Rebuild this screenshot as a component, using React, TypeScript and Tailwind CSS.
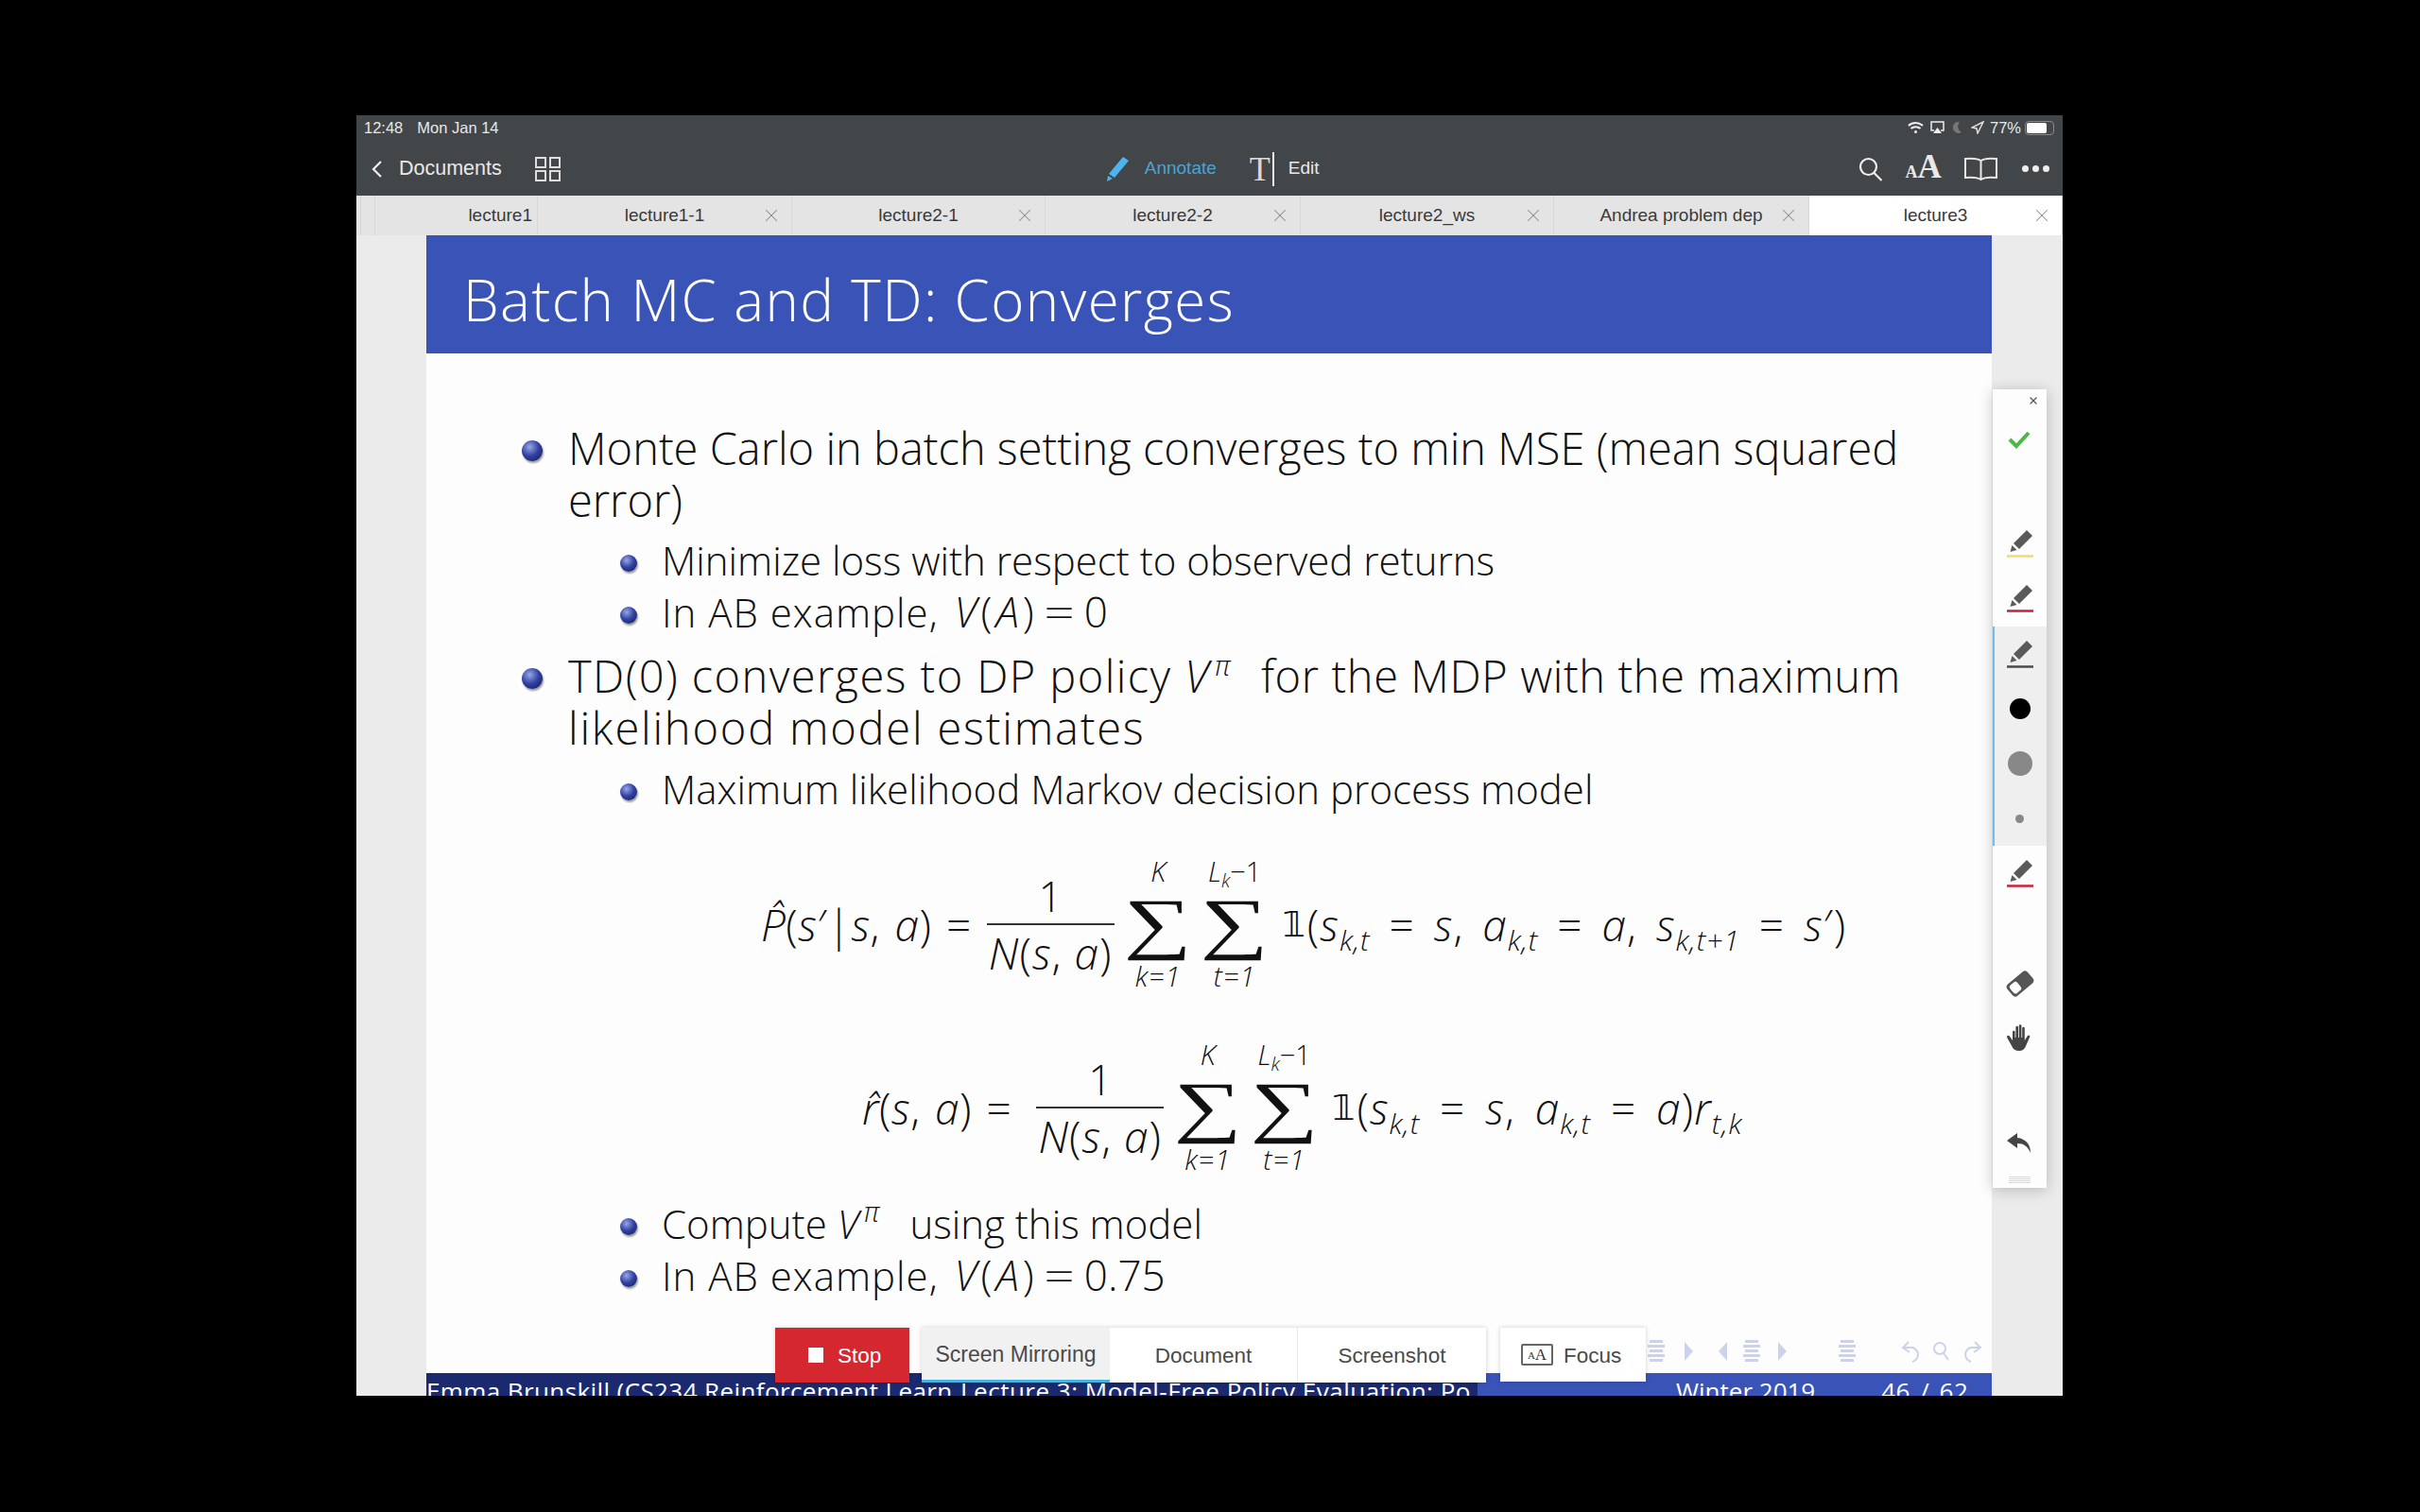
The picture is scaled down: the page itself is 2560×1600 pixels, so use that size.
import { ReactNode } from 'react';
import { X } from 'lucide-react';

const uiFont = "font-['Liberation_Sans',Arial,sans-serif]";
const slideFont = "font-['Open_Sans',sans-serif] font-light";

const tabs = [
  { label: 'lecture1-1', width: 'w-[269px]' },
  { label: 'lecture2-1', width: 'w-[268px]' },
  { label: 'lecture2-2', width: 'w-[270px]' },
  { label: 'lecture2_ws', width: 'w-[268px]' },
  { label: 'Andrea problem dep', width: 'w-[270px]' },
];

function Tab({ label, width, active }: { label: string; width: string; active?: boolean }) {
  return (
    <div
      className={`relative flex h-full items-center justify-center border-r border-[#d8d8d8] ${width} ${active ? 'bg-white' : ''}`}
    >
      <span className="text-[19px] text-[#3a3a3a]">{label}</span>
      <X className="absolute right-[10px] top-[10px] text-[#8a8a8a]" size={22} strokeWidth={1.1} />
    </div>
  );
}

function Bullet({ big }: { big?: boolean }) {
  return (
    <span
      className={`shrink-0 rounded-full bg-[radial-gradient(circle_at_38%_32%,#98a6e8,#3040a0_48%,#141c58_95%)] shadow-[1px_2px_2px_#9a9a9a] ${big ? 'size-[22px]' : 'size-[18px]'}`}
    />
  );
}

function Item({ children }: { children: ReactNode }) {
  return (
    <div className="flex items-start text-[47px]">
      <span className="flex h-[55px] w-[150px] items-center justify-end pr-[27px] pt-[4px]">
        <Bullet big />
      </span>
      <div className="whitespace-nowrap">{children}</div>
    </div>
  );
}

function SubItem({ children }: { children: ReactNode }) {
  return (
    <div className="flex items-start text-[42px]">
      <span className="flex h-[55px] w-[249px] items-center justify-end pr-[26px] pt-[6px]">
        <Bullet />
      </span>
      <div className="whitespace-nowrap">{children}</div>
    </div>
  );
}

function I({ children }: { children: ReactNode }) {
  return <span className="italic">{children}</span>;
}

function Sub({ children }: { children: ReactNode }) {
  return <span className="relative top-[10px] text-[30px] leading-[0] italic">{children}</span>;
}

function Pi() {
  return <span className="relative -top-[18px] ml-[5px] mr-[32px] text-[29px] leading-[0] italic">π</span>;
}

function VofA({ value }: { value: string }) {
  return (
    <span className="ml-[6px] text-[44px]">
      <I>V</I>
      <span className="mx-[4px]">(</span>
      <I>A</I>
      <span className="ml-[4px]">)</span>
      <span className="mx-[14px] inline-block scale-x-[1.3]">=</span>
      {value}
    </span>
  );
}

function Fraction() {
  return (
    <div className="ml-[16px] mr-[6px] flex w-[135px] flex-col items-center">
      <div className="h-[58px] text-[44px] leading-[58px]">1</div>
      <div className="h-[2px] w-full bg-[#333]" />
      <div className="h-[58px] text-[46px] leading-[58px] tracking-[1px]">
        <I>N</I>(<I>s</I>, <I>a</I>)
      </div>
    </div>
  );
}

function Sum({ top, bottom }: { top: ReactNode; bottom: ReactNode }) {
  return (
    <div className="flex w-[81px] flex-col items-center">
      <div className="h-[30px] text-[29px] leading-[30px]">{top}</div>
      <div className="flex h-[80px] scale-x-[1.4] items-center font-['Liberation_Serif',serif] text-[72px] leading-[80px] font-normal">
        ∑
      </div>
      <div className="h-[32px] text-[29px] leading-[32px] tracking-[1px] italic">{bottom}</div>
    </div>
  );
}

function SumPair() {
  return (
    <>
      <Sum top={<I>K</I>} bottom="k=1" />
      <Sum
        top={
          <span className="whitespace-nowrap">
            <I>L</I>
            <span className="relative top-[6px] text-[20px] leading-[0] italic">k</span>−1
          </span>
        }
        bottom="t=1"
      />
    </>
  );
}

function Indicator() {
  return <span className="ml-[10px] mr-[2px] font-['DejaVu_Sans',sans-serif] text-[38px] font-normal">𝟙</span>;
}

function Pencil({ line }: { line: string }) {
  return (
    <svg width="30" height="30" viewBox="0 0 30 30">
      <path d="M22 1l6 6-14 14-6-6z" fill="#5a5a5a" />
      <path d="M6.500 17l5 5-7 2z" fill="#5a5a5a" />
      <path d="M1 28.500h28" stroke={line} strokeWidth="2.500" />
    </svg>
  );
}

function NavList({ className = '' }: { className?: string }) {
  return (
    <svg className={className} width="18" height="24" viewBox="0 0 18 24" fill="#ccd2ea">
      <rect x="2" y="0" width="14" height="3" />
      <rect x="0" y="5" width="18" height="3" />
      <rect x="2" y="10" width="14" height="3" />
      <rect x="0" y="15" width="18" height="3" />
      <rect x="2" y="20" width="14" height="3" />
    </svg>
  );
}

function NavArrow({ left }: { left?: boolean }) {
  return (
    <svg width="9" height="20" viewBox="0 0 9 20" fill="#ccd2ea">
      <path d={left ? 'M9 0v20L0 10z' : 'M0 0v20l9-10z'} />
    </svg>
  );
}

function SidePanel() {
  return (
    <div className="absolute left-[1731px] top-[290px] flex h-[845px] w-[57px] flex-col bg-[#fdfdfd] shadow-[0_2px_14px_rgba(0,0,0,0.22)]">
      <div className="relative h-[251px] shrink-0">
        <X className="absolute right-[8px] top-[6px] text-[#555]" size={12} strokeWidth={2.5} />
        <svg className="absolute left-[16px] top-[43px]" width="24" height="20" viewBox="0 0 24 20">
          <path d="M2 10l7 7L22 3" fill="none" stroke="#4cb848" strokeWidth="4" />
        </svg>
        <div className="absolute left-[14px] top-[148px]">
          <Pencil line="#f5d76e" />
        </div>
        <div className="absolute left-[14px] top-[206px]">
          <Pencil line="#c8203a" />
        </div>
      </div>
      <div className="flex h-[232px] shrink-0 flex-col items-center border-l-2 border-[#6cc0e8] bg-[#efefef] pt-[14px]">
        <div className="-ml-[2px] h-[30px]">
          <Pencil line="#4a4a4a" />
        </div>
        <span className="-ml-[2px] mt-[32px] size-[22px] rounded-full bg-black" />
        <span className="-ml-[2px] mt-[34px] size-[26px] rounded-full bg-[#888]" />
        <span className="-ml-[2px] mt-[41px] size-[9px] rounded-full bg-[#888]" />
      </div>
      <div className="relative flex-1">
        <div className="absolute left-[14px] top-[14px]">
          <Pencil line="#c8203a" />
        </div>
        <svg className="absolute left-[14px] top-[131px]" width="30" height="30" viewBox="0 0 30 30">
          <g transform="rotate(-40 15 15)">
            <rect x="1" y="7" width="28" height="16" rx="4" fill="#555" />
            <rect x="3.500" y="9.500" width="10" height="11" rx="3" fill="#fdfdfd" />
          </g>
        </svg>
        <svg className="absolute left-[14px] top-[188px]" width="28" height="30" viewBox="0 0 28 30" fill="#444">
          <path d="M7 9a1.300 1.300 0 0 1 2.600 0v6h.8V4a1.300 1.300 0 0 1 2.600 0v11h.8V2.500a1.300 1.300 0 0 1 2.600 0V15h.8V5a1.300 1.300 0 0 1 2.600 0v13l2.800-4.500c1.500-2 3.200-.6 2.500 1-1.500 3.300-3 7.500-4.600 10.500-1.300 2.600-3.300 4-6.500 4-4 0-6.500-1.500-7.800-5L1.200 15c-.7-2 1.500-3 2.700-1.500L7 18z" />
        </svg>
        <svg className="absolute left-[14px] top-[303px]" width="28" height="24" viewBox="0 0 28 24" fill="#444">
          <path d="M12 1L1 9l11 8v-5c7 0 11 3 14 10 0-9-5-15-14-16z" />
        </svg>
        <div className="absolute left-[17px] top-[350px] flex w-[23px] flex-col gap-[1px]">
          <span className="h-[1px] bg-[#d8d8d8]" />
          <span className="h-[1px] bg-[#d8d8d8]" />
          <span className="h-[1px] bg-[#d8d8d8]" />
          <span className="h-[1px] bg-[#d8d8d8]" />
        </div>
      </div>
    </div>
  );
}

function MirrorBar() {
  return (
    <div className={`absolute left-[443px] top-[1283px] flex h-[58px] items-start text-[22.500px] text-[#4a4a4a] ${uiFont}`}>
      <div className="flex h-[58px] w-[142px] items-center bg-[#d5272f] pl-[35px] text-white shadow-[0_0_4px_rgba(0,0,0,0.2)]">
        <span className="size-[16px] bg-white" />
        <span className="ml-[15px] pt-[2px]">Stop</span>
      </div>
      <div className="ml-[13px] flex h-[58px] shadow-[0_0_5px_rgba(0,0,0,0.18)]">
        <div className="flex w-[199px] items-center justify-center border-b-[3px] border-[#45b4e4] bg-[#f1f1f1] pt-[2px] text-[23px]">
          Screen Mirroring
        </div>
        <div className="flex w-[199px] items-center justify-center border-r border-[#e6e6e6] bg-white pt-[2px]">Document</div>
        <div className="flex w-[199px] items-center justify-center bg-white pt-[2px]">Screenshot</div>
      </div>
      <div className="ml-[15px] flex h-[57px] w-[154px] items-center bg-white pl-[22px] shadow-[0_0_5px_rgba(0,0,0,0.18)]">
        <span className="flex h-[23px] w-[34px] items-end justify-center rounded-[2px] border-2 border-[#666] font-['Liberation_Serif',serif] leading-[18px] text-[#333]">
          <span className="text-[11px]">A</span>
          <span className="text-[17px]">A</span>
        </span>
        <span className="ml-[11px] pt-[2px]">Focus</span>
      </div>
    </div>
  );
}

export default function App() {
  return (
    <div className="h-[1600px] w-[2560px] overflow-hidden bg-black pl-[377px] pt-[122px]">
      <div className={`relative flex h-[1355px] w-[1805px] flex-col overflow-hidden ${uiFont}`}>
        <header className="flex h-[85px] shrink-0 flex-col bg-[#434649] text-[#e8e8e8]">
          <div className="flex h-[26px] items-center pl-[8px] pr-[9px] text-[16.500px]">
            <span>12:48</span>
            <span className="ml-[15px]">Mon Jan 14</span>
            <div className="ml-auto flex items-center">
              <svg width="17" height="14" viewBox="0 0 17 14" fill="none" stroke="#eee" strokeWidth="2">
                <path d="M1 5c4-4 11-4 15 0M3.500 8c2.700-2.500 7.300-2.500 10 0" />
                <circle cx="8.500" cy="11.500" r="1.500" fill="#eee" stroke="none" />
              </svg>
              <svg className="ml-[7px]" width="15" height="14" viewBox="0 0 15 14" fill="none">
                <path d="M4 10H1V1h13v9h-3" stroke="#eee" strokeWidth="1.500" />
                <path d="M7.500 7l4.500 6H3z" fill="#eee" />
              </svg>
              <svg className="ml-[9px]" width="10" height="14" viewBox="0 0 10 14">
                <path d="M7 1a6 6 0 1 0 2 11A7 7 0 0 1 7 1z" fill="#777" />
              </svg>
              <svg className="ml-[9px]" width="14" height="14" viewBox="0 0 14 14">
                <path d="M13 1L1 7l5 1 1 5z" fill="none" stroke="#ddd" strokeWidth="1.500" />
              </svg>
              <span className="ml-[6px]">77%</span>
              <span className="ml-[4px] flex h-[15px] w-[31px] items-center rounded-[4px] border border-[#888] p-[1px]">
                <span className="h-full w-[77%] rounded-[2px] bg-white" />
              </span>
            </div>
          </div>
          <div className="flex flex-1 items-center pt-[2px] text-[21.500px]">
            <svg className="ml-[16px]" width="12" height="20" viewBox="0 0 12 20" fill="none" stroke="#eee" strokeWidth="2.200">
              <path d="M10 2L2 10l8 8" />
            </svg>
            <span className="ml-[17px]">Documents</span>
            <svg className="ml-[35px]" width="27" height="26" viewBox="0 0 27 26" fill="none" stroke="#ddd" strokeWidth="2">
              <rect x="1" y="1" width="10" height="10" />
              <rect x="16" y="1" width="10" height="10" />
              <rect x="1" y="15" width="10" height="10" />
              <rect x="16" y="15" width="10" height="10" />
            </svg>
            <svg className="ml-[576px]" width="26" height="27" viewBox="0 0 26 27" fill="#4db4ef">
              <path d="M19 1l6 4L10 23l-6-4z" />
              <path d="M3 21l5 3-6 3z" />
            </svg>
            <span className="ml-[16px] text-[19px] text-[#4aa3d4]">Annotate</span>
            <span className="relative ml-[35px] w-[26px] font-['Liberation_Serif',serif] text-[36px] leading-[36px] font-light text-[#d8d8d8]">
              T
              <span className="absolute right-0 top-0 h-[36px] w-[1.500px] bg-[#eee]" />
            </span>
            <span className="ml-[15px] text-[19px]">Edit</span>
            <svg className="ml-[570px]" width="26" height="26" viewBox="0 0 26 26" fill="none" stroke="#eee" strokeWidth="2.200">
              <circle cx="10.500" cy="10.500" r="8.500" />
              <path d="M16.500 17l8 8" />
            </svg>
            <span className="ml-[24px] flex w-[40px] items-baseline pt-[2px] font-['Liberation_Serif',serif] font-bold leading-[30px]">
              <span className="text-[18px]">A</span>
              <span className="text-[35px]">A</span>
            </span>
            <svg className="ml-[22px]" width="35" height="26" viewBox="0 0 35 26" fill="none" stroke="#e8e8e8" strokeWidth="2">
              <path d="M17.500 4C14 1.500 6 1.500 1 2v20c5-.5 13-.5 16.500 2 3.500-2.500 11.500-2.500 16.500-2V2C29 1.500 21 1.500 17.500 4zM17.500 4v20" />
            </svg>
            <span className="ml-[26px] flex gap-[4px]">
              <span className="size-[7px] rounded-full bg-[#eee]" />
              <span className="size-[7px] rounded-full bg-[#eee]" />
              <span className="size-[7px] rounded-full bg-[#eee]" />
            </span>
          </div>
        </header>

        <nav className="flex h-[42px] shrink-0 bg-[#e4e4e4]">
          <div className="relative flex h-full w-[192px] items-center justify-end border-r border-[#d8d8d8] pr-[5px]">
            <span className="absolute left-[4px] top-0 h-full w-[1px] bg-[#d8d8d8]" />
            <span className="absolute left-[19px] top-0 h-full w-[1px] bg-[#d8d8d8]" />
            <span className="text-[19px] text-[#3a3a3a]">lecture1</span>
          </div>
          {tabs.map((tab) => (
            <Tab key={tab.label} label={tab.label} width={tab.width} />
          ))}
          <Tab label="lecture3" width="w-[268px]" active />
        </nav>

        <main className="flex min-h-0 flex-1 bg-[#ebebeb] pl-[74px]">
          <div className={`flex h-[1228px] w-[1656px] flex-col bg-[#fdfdfd] text-[#111] ${slideFont}`}>
            <div className="flex h-[125px] shrink-0 items-center bg-[#3953b7] pl-[39px] pt-[10px] text-[60px] tracking-[1.400px] text-white">
              Batch MC and TD: Converges
            </div>

            <div className="h-[1079px] shrink-0 overflow-hidden pt-[73px] leading-[55px]">
              <Item>
                Monte Carlo in batch setting converges to min MSE (mean squared
                <br />
                error)
              </Item>
              <div className="mt-[8px]">
                <SubItem>Minimize loss with respect to observed returns</SubItem>
                <SubItem>
                  <span className="tracking-[1px]">In AB example,</span> <VofA value="0" />
                </SubItem>
              </div>
              <div className="mt-[13px]">
                <Item>
                  <span className="tracking-[1.400px]">
                    TD(0) converges to DP policy <I>V</I>
                  </span>
                  <Pi />
                  <span className="tracking-[0.600px]">for the MDP with the maximum</span>
                  <br />
                  <span className="tracking-[1.800px]">likelihood model estimates</span>
                </Item>
              </div>
              <div className="mt-[9px]">
                <SubItem>Maximum likelihood Markov decision process model</SubItem>
              </div>

              <div className="mt-[42px] flex h-[148px] items-center pl-[354px] whitespace-nowrap text-[46px]">
                <span className="tracking-[0.500px] [word-spacing:3px]">
                  <I>P̂</I>(<I>s</I>′|<I>s</I>, <I>a</I>) =
                </span>
                <Fraction />
                <SumPair />
                <Indicator />
                <span className="tracking-[1px] [word-spacing:7px]">
                  (<I>s</I>
                  <Sub>k,t</Sub> = <I>s</I>, <I>a</I>
                  <Sub>k,t</Sub> = <I>a</I>, <I>s</I>
                  <Sub>k,t+1</Sub> = <I>s</I>′)
                </span>
              </div>
              <div className="mt-[46px] flex h-[148px] items-center pl-[461px] whitespace-nowrap text-[46px]">
                <span className="pr-[10px] tracking-[0.500px] [word-spacing:3px]">
                  <I>r̂</I>(<I>s</I>, <I>a</I>) =
                </span>
                <Fraction />
                <SumPair />
                <Indicator />
                <span className="tracking-[1px] [word-spacing:8px]">
                  (<I>s</I>
                  <Sub>k,t</Sub> = <I>s</I>, <I>a</I>
                  <Sub>k,t</Sub> = <I>a</I>)<I>r</I>
                  <Sub>t,k</Sub>
                </span>
              </div>

              <div className="mt-[21px]">
                <SubItem>
                  Compute <I>V</I>
                  <Pi />
                  using this model
                </SubItem>
                <SubItem>
                  <span className="tracking-[1px]">In AB example,</span> <VofA value="0.75" />
                </SubItem>
              </div>
            </div>

            <footer className="flex h-[24px] shrink-0 overflow-hidden bg-[#3953b7] pt-[1px] text-[26px] leading-[36px] font-normal text-white">
              <div className="-mt-[1px] flex w-[1112px] shrink-0 overflow-hidden bg-[#1b2a6e] pt-[1px] whitespace-nowrap">
                <span className="w-[565px] shrink-0 overflow-hidden tracking-[0.400px]">Emma Brunskill (CS234 Reinforcement Learn</span>
                <span className="tracking-[0.500px]">Lecture 3: Model-Free Policy Evaluation: Po</span>
              </div>
              <span className="ml-[210px]">Winter 2019</span>
              <span className="ml-[70px] tracking-[0.500px] [word-spacing:3px]">46 / 62</span>
            </footer>
          </div>
        </main>

        <div className="absolute left-[1366px] top-[1295px] flex items-center">
          <NavList />
          <span className="ml-[21px]">
            <NavArrow />
          </span>
          <span className="ml-[27px]">
            <NavArrow left />
          </span>
          <NavList className="ml-[17px]" />
          <span className="ml-[19px]">
            <NavArrow />
          </span>
          <NavList className="ml-[55px]" />
          <svg className="ml-[47px]" width="86" height="26" viewBox="0 0 86 26" fill="none" stroke="#ccd2ea" strokeWidth="2">
            <path d="M9 3L3 9l7 5M4 9h9a9 8 0 0 1 0 15" />
            <circle cx="42" cy="10" r="6" />
            <path d="M46 15l5 7" />
            <path d="M79 3l6 6-7 5M84 9h-9a9 8 0 0 0 0 15" />
          </svg>
        </div>

        <SidePanel />
        <MirrorBar />
      </div>
    </div>
  );
}
